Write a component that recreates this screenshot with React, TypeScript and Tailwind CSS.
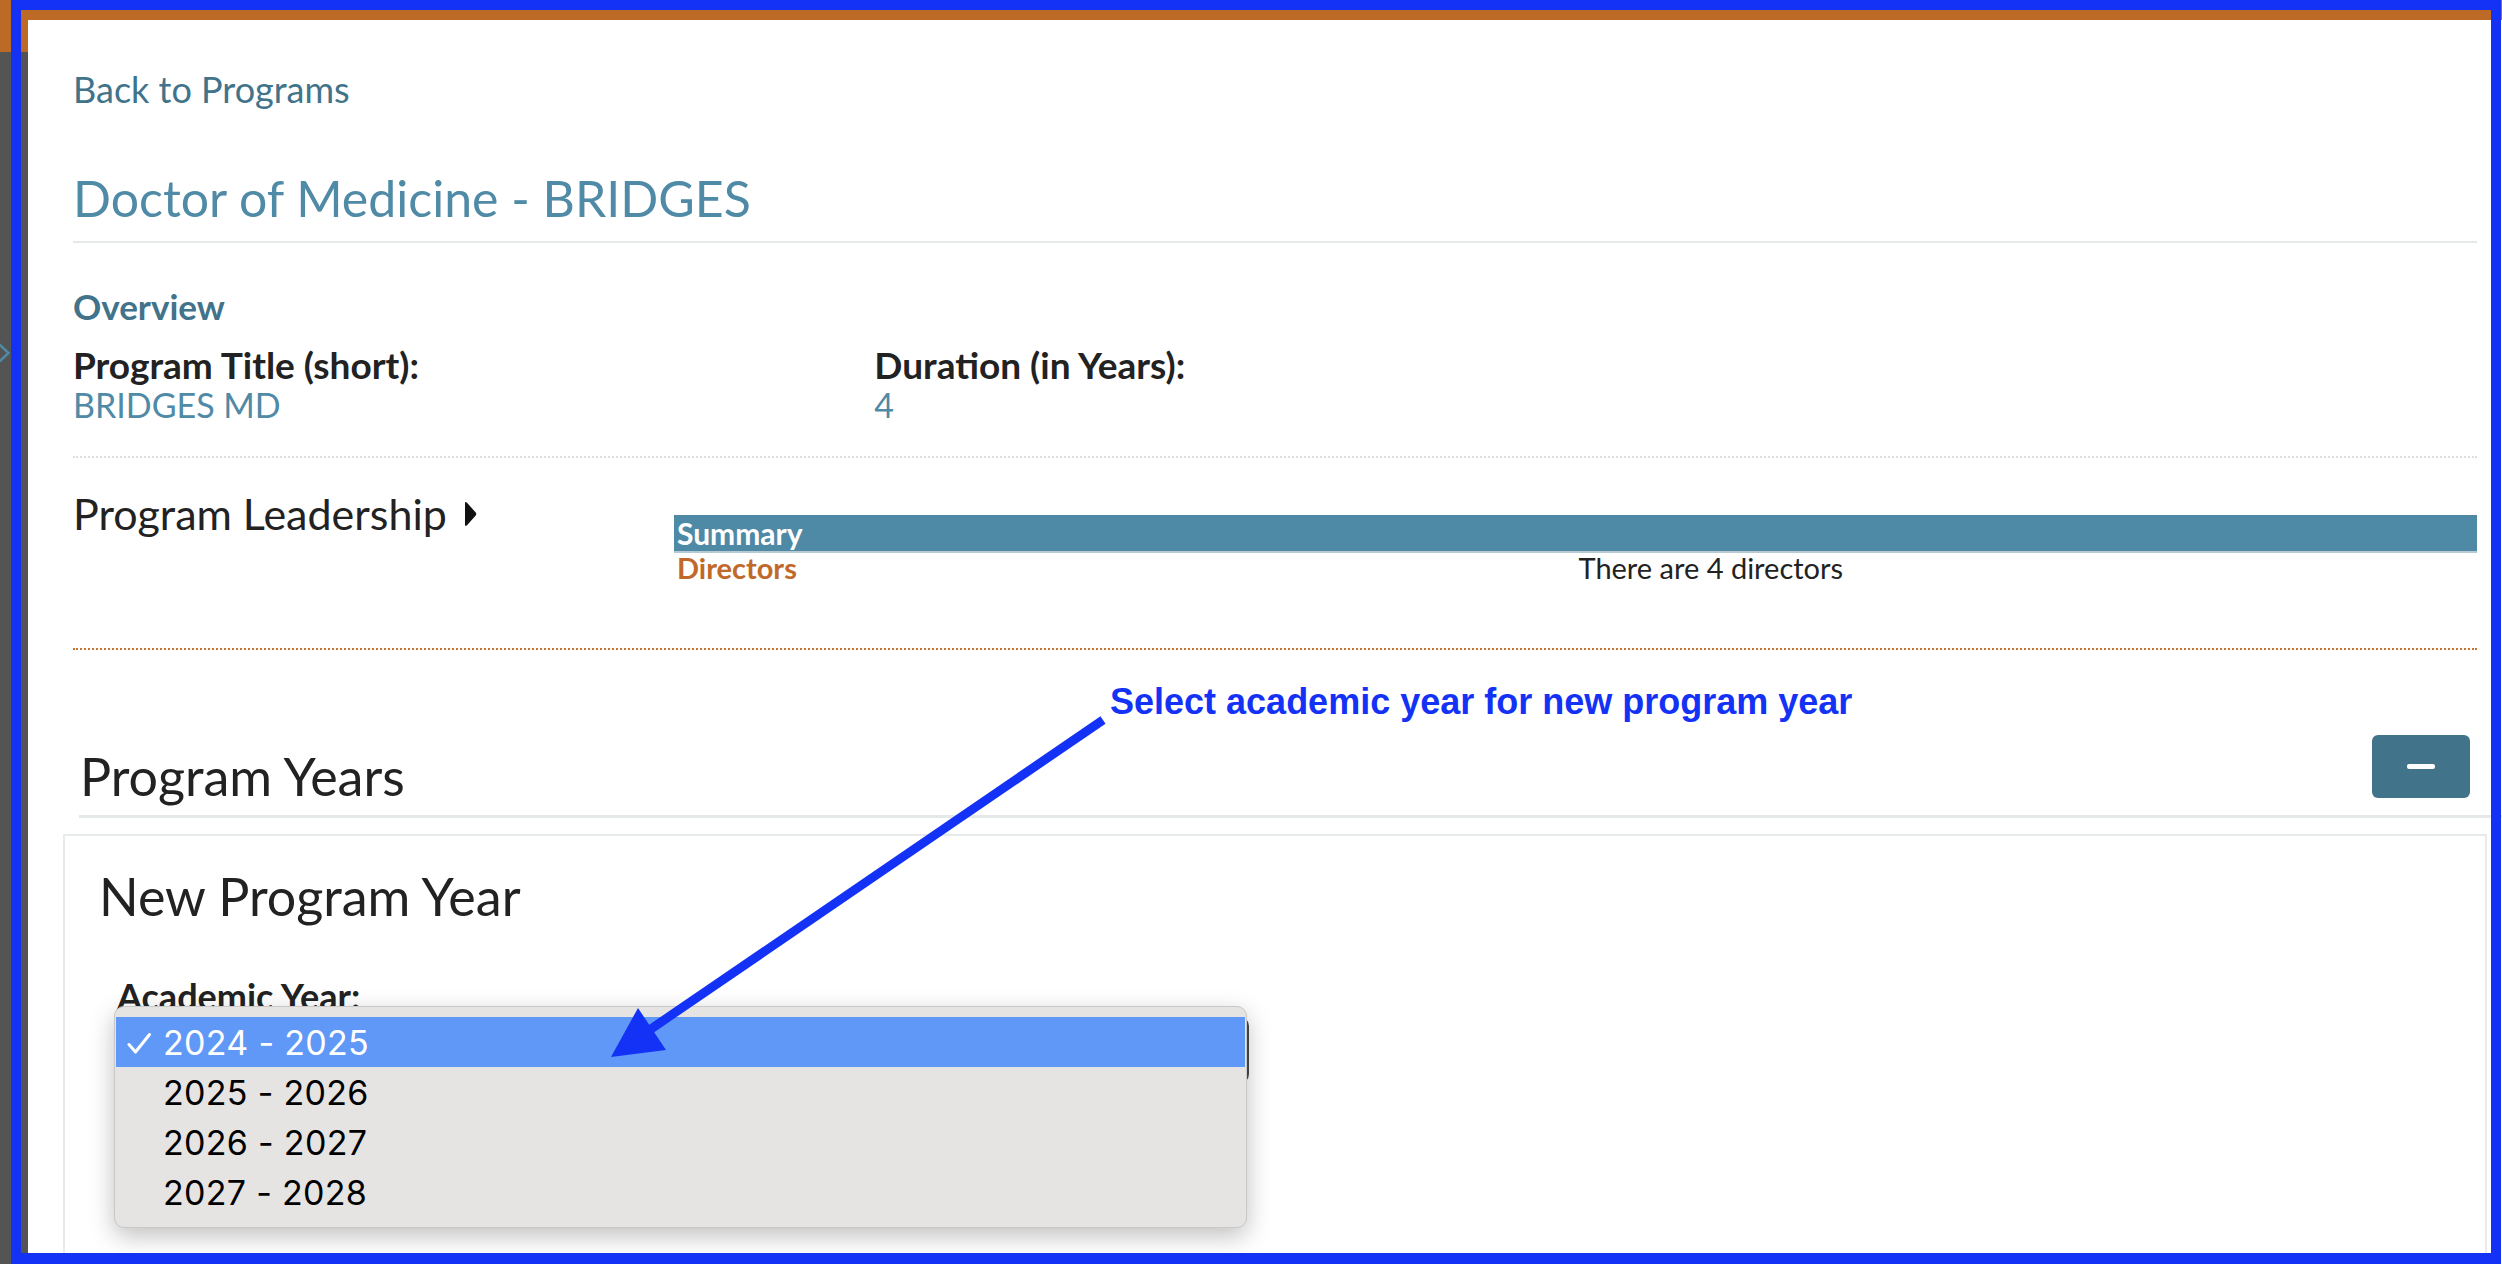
import React from "react";

const years = ["2024 - 2025", "2025 - 2026", "2026 - 2027", "2027 - 2028"];

function YearPopup() {
  // native select popup, drawn open over the select
  return (
    <div className="absolute left-[-1px] top-[-10px] w-[1133px] rounded-[10px] border border-[#c9c8c7] bg-[#e5e4e3] px-px pt-[10px] pb-[10px] shadow-[0_8px_24px_rgba(0,0,0,0.25)] font-['Inter',sans-serif] text-[34px] tracking-[0.3px]">
      {years.map((y, i) => (
        <div
          key={y}
          className={
            i === 0
              ? "relative flex h-[50px] items-center bg-[#5f98f6] pl-[47px] text-white"
              : "relative flex h-[50px] items-center pl-[47px] text-black"
          }
        >
          {i === 0 && (
            <svg className="absolute left-[11px] top-[16px]" width="25" height="21" viewBox="0 0 25 21" fill="none">
              <path d="M2 11.5 L8.5 19 L22.5 1.5" stroke="white" strokeWidth="3" strokeLinecap="round" strokeLinejoin="round" />
            </svg>
          )}
          {y}
        </div>
      ))}
    </div>
  );
}

export default function App() {
  return (
    <div className="relative flex h-[1264px] w-[2502px] overflow-hidden bg-white font-['Lato',sans-serif] text-[#222]">
      {/* sidebar strip */}
      <aside className="flex w-[28px] flex-none flex-col bg-[#545454]">
        <div className="h-[52px] bg-[#be6a27]" />
        <svg className="mt-[291px]" width="12" height="20" viewBox="0 0 12 20" fill="none">
          <path d="M-1 1 L8.5 10 L-1 19" stroke="#4f8aa6" strokeWidth="2.5" />
        </svg>
      </aside>

      <div className="flex min-w-0 flex-1 flex-col">
        <div className="h-[20px] flex-none bg-[#be6a27]" />

        <main className="pl-[45px] pr-[25px] pt-[49px]">
          <a className="block text-[36px] leading-[40px] text-[#41738a]">Back to Programs</a>

          <div className="mt-[58px] border-b-2 border-[#e5e9ea] pb-[12px]">
            <h1 className="text-[50px] leading-[62px] text-[#4f8aa6]">Doctor of Medicine - BRIDGES</h1>
          </div>

          {/* Overview */}
          <h2 className="mt-[43px] text-[35px] font-bold leading-[40px] text-[#41738a]">Overview</h2>
          <div className="mt-[19px] grid grid-cols-3 border-b-2 border-dotted border-[#dedede] pb-[31px] leading-[40px]">
            <div>
              <div className="text-[37px] font-bold">Program Title (short):</div>
              <div className="text-[34px] text-[#4f8aa6]">BRIDGES MD</div>
            </div>
            <div>
              <div className="text-[37px] font-bold">Duration (in Years):</div>
              <div className="text-[34px] text-[#4f8aa6]">4</div>
            </div>
          </div>

          {/* Leadership */}
          <div className="grid grid-cols-4 items-start border-b-2 border-dotted border-[#c8732f] pt-[32px] pb-[65px]">
            <div className="flex items-center gap-[16px] text-[43px] leading-[48px]">
              Program Leadership
              <svg width="14" height="26" viewBox="0 0 14 26">
                <path d="M2 2.5 Q2 0 4 1.8 L12.5 11.3 Q14 13 12.5 14.7 L4 24.2 Q2 26 2 23.5 Z" fill="#111" />
              </svg>
            </div>
            <div className="col-span-3 mt-[25px]">
              <div className="flex h-[38px] items-center border-b-2 border-[#b7c9d2] bg-[#4e89a6] pl-[3px] text-[30px] font-bold text-white">
                Summary
              </div>
              <div className="grid h-[30px] grid-cols-2 text-[29px] leading-[30px]">
                <div className="pl-[3px] font-bold text-[#c0692b]">Directors</div>
                <div className="pl-[3px]">There are 4 directors</div>
              </div>
            </div>
          </div>

          {/* Program years */}
          <div className="mt-[85px] flex items-start justify-between pl-[7px] pr-[7px]">
            <h2 className="mt-[12px] text-[52px] leading-[58px]">Program Years</h2>
            <button className="flex h-[63px] w-[98px] items-center justify-center rounded-[6px] bg-[#41738a]">
              <span className="h-[5px] w-[28px] rounded-[2px] bg-white" />
            </button>
          </div>
          <div className="mt-[10px] ml-[6px] mr-[-25px] h-[3px] bg-[#e6e9ea]" />

          <section className="mt-[16px] ml-[-10px] mr-[-10px] h-[500px] border-2 border-[#e8ebec] pl-[34px] pt-[31px]">
            <h3 className="text-[52px] leading-[58px]">New Program Year</h3>
            <div className="ml-[18px] mt-[51px]">
              <label className="block text-[36px] font-bold leading-[40px]">Academic Year:</label>
              <div className="relative ml-[-2px]">
                <div className="h-[68px] w-[1134px] rounded-[10px] border-2 border-[#4a4a4a] bg-white" />
                <YearPopup />
              </div>
            </div>
          </section>
        </main>
      </div>

      {/* annotation: frame */}
      <div className="pointer-events-none absolute left-[11px] top-0 h-[1264px] w-[2490px] border-[10px] border-b-[11px] border-[#1432f5]" />

      {/* annotation: arrow */}
      <svg className="pointer-events-none absolute left-0 top-0" width="2502" height="1264" viewBox="0 0 2502 1264">
        <line x1="1103" y1="720" x2="648" y2="1031" stroke="#1432f5" strokeWidth="9" />
        <polygon points="611,1057 638,1008 666,1050" fill="#1432f5" />
      </svg>

      {/* annotation: note */}
      <div className="pointer-events-none absolute left-[1110px] top-[680px] font-['Liberation_Sans',Arial,sans-serif] text-[36px] font-bold leading-[44px] text-[#1432f5]">
        Select academic year for new program year
      </div>
    </div>
  );
}
